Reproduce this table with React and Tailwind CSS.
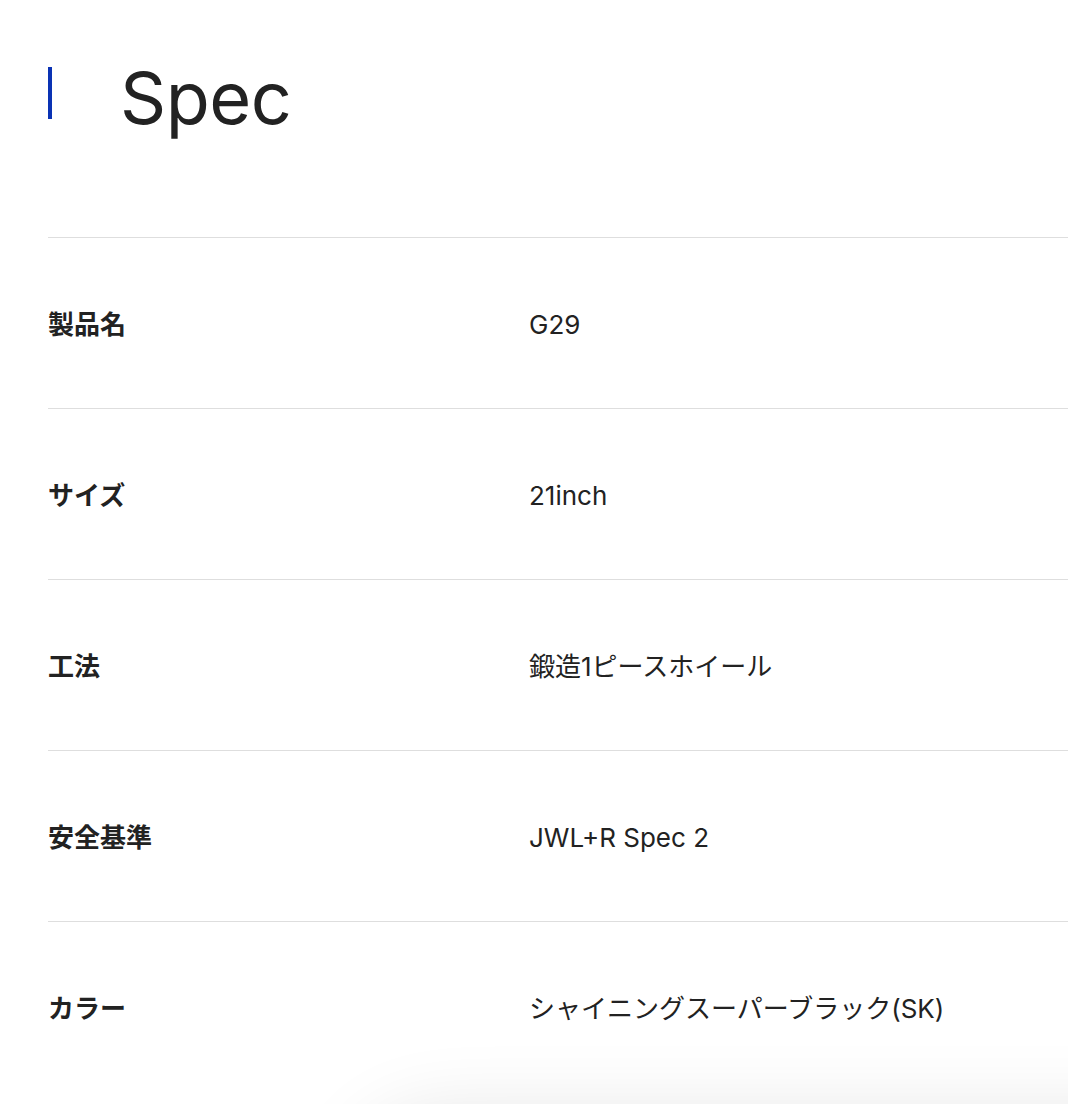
const specs = [
    { label: "製品名", value: "G29" },
    { label: "サイズ", value: "21inch" },
    { label: "工法", value: "鍛造1ピースホイール" },
    { label: "安全基準", value: "JWL+R Spec 2" },
    { label: "カラー", value: "シャイニングスーパーブラック(SK)" },
];

const App = () => {
    return (
        <div className="relative h-[1104px] overflow-hidden bg-white text-[#222] font-['Inter','Noto_Sans_CJK_JP',sans-serif]">
            {/* Heading */}
            <div className="flex items-start pl-12 pt-[62px]">
                <span className="mt-[5px] block h-[52px] w-1 bg-[#0a32b4]" />
                <h2 className="ml-[68px] text-[72px] leading-[72px] font-normal tracking-[-0.5px]">
                    Spec
                </h2>
            </div>

            {/* Spec table */}
            <dl className="mt-[103px] pl-12">
                {specs.map((s) => (
                    <div
                        key={s.label}
                        className="flex h-[171px] items-center border-t border-[#dedede] pt-[2px]"
                    >
                        <dt className="w-[481px] text-[26px] font-bold leading-[39px]">
                            {s.label}
                        </dt>
                        <dd className="text-[26px] leading-[39px]">{s.value}</dd>
                    </div>
                ))}
            </dl>

            {/* Soft shadow of the floating element below */}
            <div className="absolute left-[350px] top-[1115px] h-[200px] w-[900px] rounded-[90px] bg-white shadow-[0_0_80px_rgba(0,0,0,0.11)]" />
        </div>
    );
};

export default App;
